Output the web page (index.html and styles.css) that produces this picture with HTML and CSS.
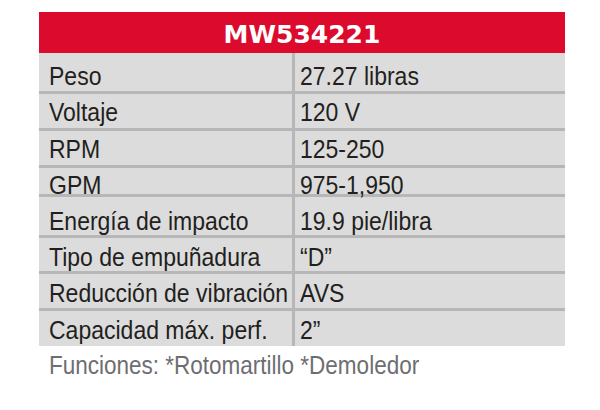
FILE: index.html
```html
<!DOCTYPE html>
<html lang="es">
<head>
<meta charset="utf-8">
<title>MW534221</title>
<link rel="stylesheet" href="styles.css">
</head>
<body>
<div class="spec">
  <div class="spec-head">MW534221</div>
  <div class="row r1"><div class="k"><span class="t">Peso</span></div><div class="v"><span class="t">27.27 libras</span></div></div>
  <div class="row r2"><div class="k"><span class="t">Voltaje</span></div><div class="v"><span class="t">120 V</span></div></div>
  <div class="row r3"><div class="k"><span class="t">RPM</span></div><div class="v"><span class="t">125-250</span></div></div>
  <div class="row r4"><div class="k"><span class="t">GPM</span></div><div class="v"><span class="t">975-1,950</span></div></div>
  <div class="row r5"><div class="k"><span class="t">Energía de impacto</span></div><div class="v"><span class="t">19.9 pie/libra</span></div></div>
  <div class="row r6"><div class="k"><span class="t">Tipo de empuñadura</span></div><div class="v"><span class="t">“D”</span></div></div>
  <div class="row r7"><div class="k"><span class="t">Reducción de vibración</span></div><div class="v"><span class="t">AVS</span></div></div>
  <div class="row r8"><div class="k"><span class="t">Capacidad máx. perf.</span></div><div class="v"><span class="t">2”</span></div></div>
  <div class="note"><span class="t">Funciones: *Rotomartillo *Demoledor</span></div>
</div>
</body>
</html>
```
FILE: styles.css
```css
html, body {
  margin: 0;
  padding: 0;
  background: #ffffff;
}
body {
  width: 600px;
  height: 410px;
  overflow: hidden;
}
.spec {
  margin: 12px 0 0 39px;
  width: 526px;
  font-family: "Liberation Sans", Arial, sans-serif;
  font-size: 25px;
  color: #231f20;
}
.t {
  display: inline-block;
  transform: scaleX(0.92);
  transform-origin: 0 50%;
}
.spec-head {
  height: 41px;
  box-sizing: border-box;
  padding-top: 4px;
  line-height: 37px;
  background: #dc0b2e;
  color: #ffffff;
  text-align: center;
  font-family: "DejaVu Sans", sans-serif;
  font-weight: bold;
  font-size: 25px;
}
.row {
  display: flex;
  box-sizing: border-box;
  background: #dcdcdc;
  border-bottom: 3px solid #b7b7b7;
  line-height: 26px;
  white-space: nowrap;
}
.k {
  width: 256px;
  box-sizing: border-box;
  padding-left: 10px;
  border-right: 3px solid #b7b7b7;
}
.v {
  flex: 1;
  padding-left: 5px;
}
.k, .v { padding-top: var(--pt); }
.r1 { height: 41px; --pt: 10px; }
.r2 { height: 37px; --pt: 5px; }
.r3 { height: 37px; --pt: 5px; }
.r4 { height: 29px; --pt: 4px; }
.r5 { height: 41px; --pt: 11px; }
.r6 { height: 36px; --pt: 6px; }
.r7 { height: 37px; --pt: 6px; }
.r8 { height: 35px; --pt: 6px; border-bottom: 0; }
.note {
  padding: 6px 0 0 10px;
  line-height: 26px;
  color: #6d6e71;
  white-space: nowrap;
}
.note .t {
  transform: scaleX(0.9);
}
```
